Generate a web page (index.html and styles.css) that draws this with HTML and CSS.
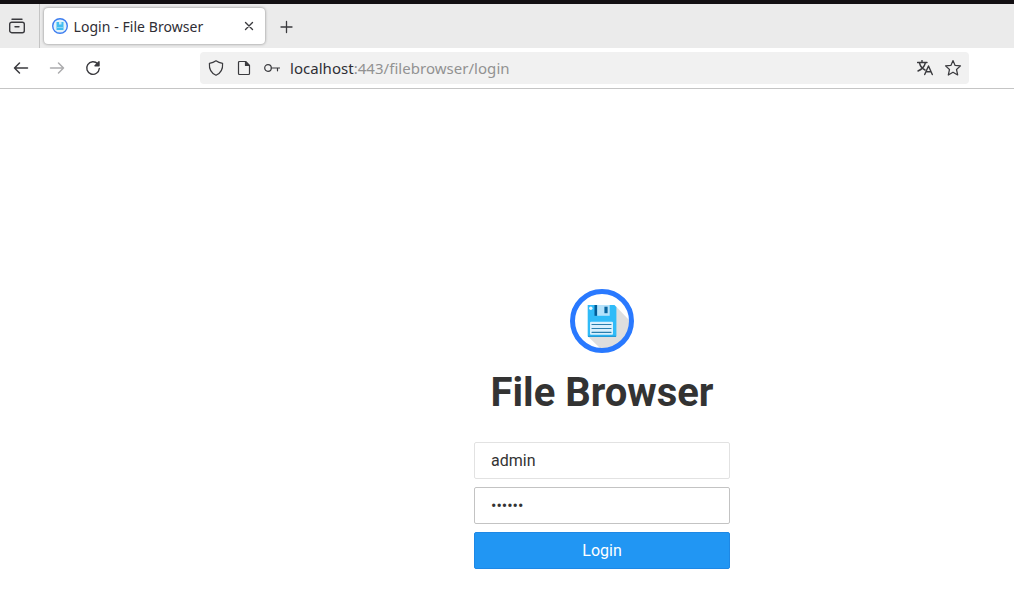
FILE: index.html
```html
<!DOCTYPE html>
<html lang="en">
<head>
<meta charset="utf-8">
<title>Login - File Browser</title>
<link rel="stylesheet" href="styles.css">
</head>
<body>
<header class="tabbar">
  <div class="view">
    <svg width="18" height="18" viewBox="0 0 18 18"><path d="M4 2.200h10M1.700 7.200a2 2 0 0 1 2-2h10.600a2 2 0 0 1 2 2v6.500a2 2 0 0 1-2 2H3.700a2 2 0 0 1-2-2zM7 9.700h4"/></svg>
  </div>
  <div class="tab">
    <svg class="favicon" width="16" height="16" viewBox="0 0 16 16"><circle cx="8" cy="8" r="7.300" fill="#e2f3fb" stroke="#3d7df0" stroke-width="1.400"/><path d="M4.500 4h7v8h-7z" fill="#42bdf0" stroke="none"/><path d="M7 4h2.500v2.500H7z" fill="#c5e9fa" stroke="none"/><path d="M5.500 9.500h5" stroke="#8fd6f5"/></svg>
    <span class="title">Login - File Browser</span>
    <svg class="close" width="10" height="10" viewBox="0 0 10 10"><path d="M1.500 1.500l7 7M8.500 1.500l-7 7"/></svg>
  </div>
  <svg class="plus" width="14" height="14" viewBox="0 0 14 14"><path d="M6.500 1.500v11M1 7h11"/></svg>
</header>
<nav class="toolbar">
  <svg class="back" width="16" height="16" viewBox="0 0 16 16"><path d="M6.500 3L1.500 8l5 5M1.500 8h13"/></svg>
  <svg class="forward" width="16" height="16" viewBox="0 0 16 16"><path d="M9.500 3l5 5-5 5M14.500 8h-13"/></svg>
  <svg class="reload" width="16" height="16" viewBox="0 0 16 16"><path d="M12.700 3.800A6.300 6.300 0 1 0 14.300 8.500"/><path d="M14 1.800V5.800H10Z" class="solid"/></svg>
  <div class="urlbar">
    <svg width="16" height="16" viewBox="0 0 16 16"><path d="M8 .800C6 2.300 3.800 3 1.400 3.300C1 8.800 3.300 13.300 8 15.300C12.700 13.300 15 8.800 14.600 3.300C12.200 3 10 2.300 8 .800Z"/></svg>
    <svg width="16" height="16" viewBox="0 0 16 16"><path d="M3.500 1.500h6.200l3.800 3.800v8.200a1 1 0 0 1-1 1h-9a1 1 0 0 1-1-1v-11a1 1 0 0 1 1-1z"/><path d="M9.500 1.800L13.200 5.500H9.500z" class="solid"/></svg>
    <svg width="16" height="16" viewBox="0 0 16 16"><circle cx="4" cy="8" r="3.300"/><path d="M7.300 8h8.200M13.500 8v2.800"/></svg>
    <span class="url"><b>localhost</b>:443/filebrowser/login</span>
    <svg class="translate" width="16" height="16" viewBox="0 0 16 16"><path d="M.500 2.500h9.500M5 .500v2M2.500 3c.8 3.500 3.500 6 5.500 7M8.300 3C7.500 6.500 4.500 9.500 1 11M7.700 14.500L11.500 6 15.300 14.500M9 11.700h5"/></svg>
    <svg width="18" height="18" viewBox="0 0 18 18"><path d="M9 1.500l2.100 4.900 5.400.500-4 3.600 1.200 5.500L9 13.200l-4.700 2.800 1.200-5.500-4-3.600 5.400-.500z"/></svg>
  </div>
</nav>
<main class="page">
  <form class="login">
    <svg class="logo" width="64" height="64" viewBox="0 0 64 64">
      <circle cx="32" cy="32" r="29.500" fill="#fff"/>
      <path d="M46 17.500L60 32A28 28 0 0 1 31 60L18 47.500Z" fill="#dedede"/>
      <path d="M17.700 16H44.500L46.400 18V47a1 1 0 0 1-1 1H18.700a1 1 0 0 1-1-1Z" fill="#2fbbf8"/>
      <path d="M18 46.700h28V48H18z" fill="#229bd8"/>
      <path d="M24.500 16h2.700v10.800h-2.700z" fill="#015b96"/>
      <path d="M27.200 16h12.500v10.800H27.200z" fill="#b5e2fb"/>
      <path d="M34.400 17.700h3.200v6.500h-3.200z" fill="#0865a0"/>
      <rect x="20" y="32.700" width="23" height="13" rx="1" fill="#d8f0fd"/>
      <path d="M22 35.500h19M22 39.500h19M22 43.300h19" stroke="#287eae"/>
      <circle cx="20.800" cy="19.200" r="1.700" fill="#e9f7fe"/>
      <circle cx="32" cy="32" r="29.500" stroke="#2979ff" stroke-width="5"/>
    </svg>
    <h1>File Browser</h1>
    <input class="field" type="text" value="admin">
    <input class="field hover" type="password" value="secret">
    <button class="submit" type="button">Login</button>
  </form>
</main>
</body>
</html>
```
FILE: styles.css
```css
* { box-sizing: border-box; }
body { margin: 0; height: 614px; overflow: hidden; background: #fff; font-family: "Noto Sans", sans-serif; }
svg { flex: none; fill: none; stroke: #3a3a3e; stroke-width: 1.2; stroke-linejoin: round; stroke-linecap: round; }
.solid { fill: #3a3a3e; }
.tabbar { display: flex; height: 48px; border-top: 4px solid #120f12; background: #ebebeb; }
.view { display: flex; align-items: center; width: 40px; padding-left: 8px; border-right: 1px solid #c4c4c4; }
.view svg { stroke-width: 1.4; }
.tab { display: flex; align-items: center; width: 221px; height: 36px; margin: 4px 0 0 4px; padding: 0 11px 0 8px; border-radius: 4px; background: #fff; box-shadow: 0 0 3px rgba(0, 0, 0, .45); }
.title { margin-left: 5.5px; font-size: 14px; letter-spacing: .06px; color: #2f2e35; white-space: nowrap; }
.close { margin-left: auto; stroke-width: 1.4; }
.plus { margin: 16px 0 0 15px; stroke-width: 1.3; }
.toolbar { display: flex; align-items: center; height: 41px; padding-left: 13px; border-bottom: 1px solid #c5c5c5; }
.back { stroke-width: 1.5; }
.forward { margin-left: 20px; stroke: #acacae; stroke-width: 1.5; }
.reload { margin-left: 20px; stroke-width: 1.4; }
.urlbar { display: flex; align-items: center; gap: 12px; width: 769px; height: 32px; margin-left: 99px; padding: 0 7px 0 8px; border-radius: 4px; background: #f1f1f1; }
.url { flex: 1; margin-left: -2px; font-size: 15px; letter-spacing: .035px; color: #929292; white-space: nowrap; }
.url b { font-weight: 400; color: #2f2e35; }
.translate { margin-right: -1px; stroke-width: 1.4; }
.page { height: 525px; padding: 200px 0 0 190px; font-family: Roboto, sans-serif; }
.login { display: flex; flex-direction: column; align-items: center; width: 256px; margin: 0 auto; }
.logo { stroke: none; }
h1 { margin: 17px 0 26px; font-size: 40px; line-height: 46px; font-weight: 700; color: #333; white-space: nowrap; }
.field { width: 256px; height: 37px; margin: 0 0 8px; padding: 0 16px; border: 1px solid #e2e2e2; border-radius: 2px; background: #fff; font: 16px Roboto, sans-serif; color: #333; outline: none; }
.field.hover { border-color: #c3c3c3; }
.submit { width: 256px; height: 37px; padding: 0; border: 1px solid #1e88e5; border-radius: 2px; background: #2196f3; font: 16px Roboto, sans-serif; color: #fff; }
```
